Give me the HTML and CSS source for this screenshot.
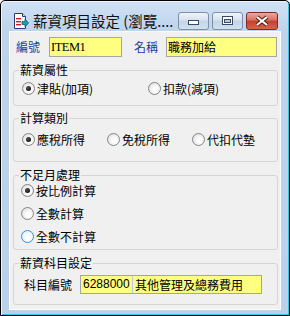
FILE: index.html
```html
<!DOCTYPE html>
<html lang="zh-Hant">

<head>
    <meta charset="UTF-8">
    <title>薪資項目設定</title>
    <link rel="stylesheet" href="styles.css">
</head>

<body>
    <div class="window">
        <div class="titlebar">
            <svg class="app-icon" width="16" height="16" viewBox="0 0 16 16">
                <path d="M1.5 0.5 H9.5 L12.5 3.5 V15.5 H1.5 Z" fill="#fff" stroke="#2a3a7a" />
                <path d="M9.5 0.5 V3.5 H12.5" fill="#dde" stroke="#2a3a7a" />
                <rect x="3" y="5" width="5" height="1.4" fill="#c8202a" />
                <rect x="3" y="8" width="5" height="1.4" fill="#c8202a" />
                <rect x="3" y="11" width="5" height="1.4" fill="#c8202a" />
                <path d="M9 8.5 H12 V6 L15.5 10 L12 14 V11.5 H9 Z" fill="#1aa0b8" stroke="#0a5a70" stroke-width="0.8" />
            </svg>
            <span class="title">薪資項目設定 (瀏覽....</span>
            <div class="caption-buttons">
                <span class="cap-btn">
                    <svg width="31" height="18"><rect x="10.5" y="8.5" width="10" height="4" fill="#fff" stroke="#3a4a62" /></svg>
                </span>
                <span class="cap-btn">
                    <svg width="31" height="18">
                        <rect x="10.5" y="4.5" width="10" height="8" fill="#fff" stroke="#3a4a62" />
                        <rect x="12.5" y="7.5" width="6" height="3" fill="#b7cbe2" stroke="#3a4a62" />
                    </svg>
                </span>
                <span class="cap-btn close">
                    <svg width="32" height="18">
                        <path d="M11 5 L21 13 M21 5 L11 13" stroke="#4a1812" stroke-width="4" />
                        <path d="M11 5 L21 13 M21 5 L11 13" stroke="#fff" stroke-width="2.2" />
                    </svg>
                </span>
            </div>
        </div>

        <div class="client">
            <div class="top-row">
                <span class="lbl code-lbl">編號</span>
                <span class="field code">ITEM1</span>
                <span class="lbl name-lbl">名稱</span>
                <span class="field name">職務加給</span>
            </div>

            <fieldset class="group g-attr">
                <legend>薪資屬性</legend>
                <div class="radio-row">
                    <span class="radio wide"><span class="circle checked"></span>津貼(加項)</span>
                    <span class="radio"><span class="circle"></span>扣款(減項)</span>
                </div>
            </fieldset>

            <fieldset class="group g-calc">
                <legend>計算類別</legend>
                <div class="radio-row">
                    <span class="radio mid"><span class="circle checked"></span>應稅所得</span>
                    <span class="radio mid"><span class="circle"></span>免稅所得</span>
                    <span class="radio"><span class="circle"></span>代扣代墊</span>
                </div>
            </fieldset>

            <fieldset class="group g-month">
                <legend>不足月處理</legend>
                <div class="radio-col">
                    <span class="radio"><span class="circle checked"></span>按比例計算</span>
                    <span class="radio"><span class="circle"></span>全數計算</span>
                    <span class="radio"><span class="circle hover"></span>全數不計算</span>
                </div>
            </fieldset>

            <fieldset class="group g-acct">
                <legend>薪資科目設定</legend>
                <div class="acct-row">
                    <span class="acct-lbl">科目編號</span>
                    <div class="acct-field">
                        <span class="acct-no">6288000</span>
                        <span class="acct-name">其他管理及總務費用</span>
                    </div>
                </div>
            </fieldset>
        </div>
    </div>
</body>

</html>
```

FILE: styles.css
```css
:root {
    --frame: #b9d1ea;
    --face: #f0f0f0;
    --label-blue: #1e3c96;
    --yellow: #ffff80;
    --group-line: #d5d5d5;
}

* {
    margin: 0;
    padding: 0;
}

body {
    background-color: #fff;
    font-family: "Noto Sans CJK TC", "Noto Sans", sans-serif;
    font-size: 12px;
    color: #000;
}

.window {
    width: 290px;
    height: 316px;
    box-sizing: border-box;
    border: 1px solid #000;
    border-radius: 5px 5px 0 0;
    background: linear-gradient(#d0e1f4, #bdd4ec 30px, var(--frame));
    box-shadow: inset 1px 1px 0 #eef4fb, inset -1px -1px 0 #38c2e4;
    padding: 0 8px 5px 8px;
    display: flex;
    flex-direction: column;
}

/* title bar */
.titlebar {
    height: 30px;
    box-sizing: border-box;
    padding-top: 11px;
    display: flex;
    align-items: flex-start;
}

.app-icon {
    margin-left: 4px;
    margin-top: 1px;
    flex: none;
}

.title {
    margin-left: 4px;
    flex: 1;
    font-size: 14.5px;
    line-height: 18px;
    color: #111;
    white-space: nowrap;
}

.caption-buttons {
    display: flex;
    gap: 3px;
    margin-right: 3px;
}

.cap-btn {
    display: block;
    width: 31px;
    height: 18px;
    box-sizing: border-box;
    border: 1px solid #7f8fa5;
    border-radius: 3px;
    background: linear-gradient(#eef3f9, #d6e2ef 45%, #c4d5e8 50%, #d2e0ee);
    overflow: hidden;
}

.cap-btn svg {
    display: block;
    margin: -1px 0 0 -1px;
}

.cap-btn.close {
    width: 32px;
    border-color: #7a2b24;
    background: linear-gradient(#e9a99c, #d7705f 45%, #c4402f 50%, #d2654f);
}

/* client area */
.client {
    flex: 1;
    background-color: var(--face);
    border: 1px solid #fbfdff;
    padding: 5px 2px 0 3px;
    display: flex;
    flex-direction: column;
}

.top-row {
    display: flex;
    align-items: center;
    height: 20px;
    margin-left: 3px;
}

.lbl {
    color: var(--label-blue);
    line-height: 14px;
}

.code-lbl {
    width: 33px;
}

.name-lbl {
    width: 32px;
    margin-left: 12px;
}

.field {
    height: 20px;
    box-sizing: border-box;
    border: 1px solid #a5a5a5;
    background-color: var(--yellow);
    line-height: 18px;
    padding-left: 1px;
}

.field.code {
    width: 73px;
    font-family: "Liberation Serif", serif;
    font-size: 12.5px;
    letter-spacing: -0.5px;
}

.field.name {
    width: 111px;
}

/* group boxes */
.group {
    box-sizing: border-box;
    border: 1px solid var(--group-line);
    border-radius: 3px;
    padding: 0 0 0 6px;
    min-width: 0;
}

.group legend {
    font-size: 12px;
    line-height: 14px;
    padding: 0 1px;
    margin-left: -1px;
}

.g-attr {
    margin-top: 6px;
    height: 43px;
}

.g-calc {
    margin-top: 5px;
    height: 51px;
}

.g-month {
    margin-top: 6px;
    height: 82px;
}

.g-acct {
    margin-top: 6px;
    height: 49px;
}

.radio-row {
    display: flex;
    margin-left: 2px;
}

.g-attr .radio-row {
    margin-top: 5px;
}

.g-calc .radio-row {
    margin-top: 8px;
}

.radio-col {
    display: flex;
    flex-direction: column;
    gap: 10px;
    margin-top: 2px;
    margin-left: 1px;
}

.radio {
    display: flex;
    align-items: center;
    height: 13px;
    line-height: 13px;
    white-space: nowrap;
}

.radio.wide {
    width: 126px;
}

.radio.mid {
    width: 85px;
}

.circle {
    width: 13px;
    height: 13px;
    box-sizing: border-box;
    border-radius: 50%;
    border: 1px solid #858585;
    background: radial-gradient(circle at 60% 60%, #fff 20%, #e4e4e4 75%, #d0d0d0);
    margin-right: 2px;
    position: relative;
    flex: none;
}

.circle.checked::after {
    content: "";
    position: absolute;
    left: 3px;
    top: 3px;
    width: 5px;
    height: 5px;
    border-radius: 50%;
    background: radial-gradient(circle at 40% 35%, #555, #111 70%);
}

.circle.hover {
    border-color: #3c8ed6;
    background: radial-gradient(circle at 60% 60%, #fff 15%, #e2f1fd 70%, #cde6fb);
}

.acct-row {
    display: flex;
    align-items: center;
    margin-top: 5px;
    margin-left: 4px;
}

.acct-lbl {
    width: 48px;
    margin-right: 8px;
    line-height: 14px;
}

.acct-field {
    display: flex;
    width: 182px;
    height: 19px;
    box-sizing: border-box;
    border: 1px solid #a5a5a5;
    background-color: var(--yellow);
    line-height: 17px;
}

.acct-no {
    width: 52px;
    border-right: 1px solid #b3cde6;
    padding-left: 2px;
    box-sizing: border-box;
    font-family: "Liberation Sans", sans-serif;
    font-size: 12px;
}

.acct-name {
    padding-left: 2px;
}
```
